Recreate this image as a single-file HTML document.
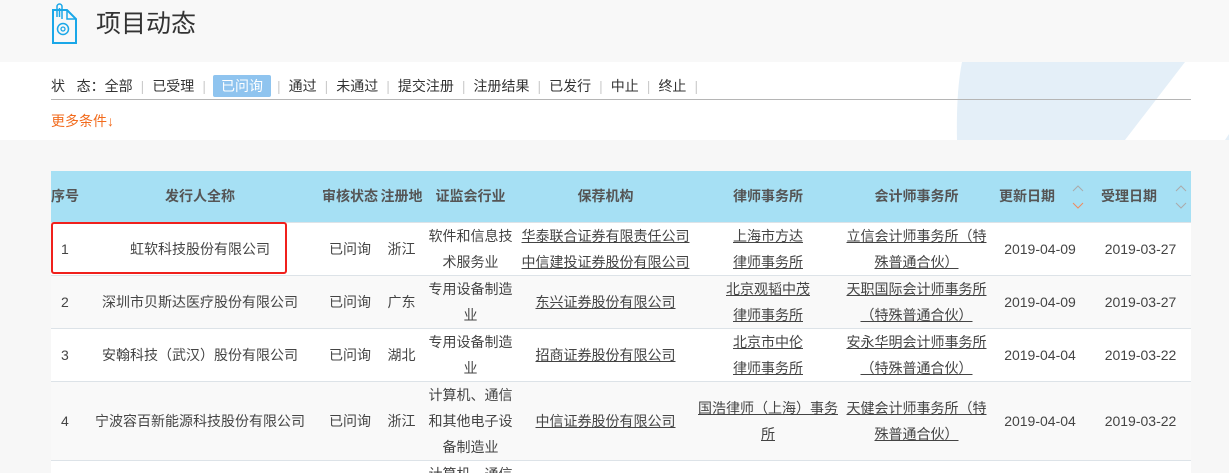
<!DOCTYPE html>
<html><head><meta charset="utf-8"><style>
*{margin:0;padding:0;box-sizing:border-box}
html,body{width:1229px;height:473px;overflow:hidden}
body{background:#f7f7f7;font-family:"Liberation Sans","Noto Sans CJK SC",sans-serif;color:#333;position:relative}
.top{position:absolute;left:0;top:0;width:1229px;height:62px;background:#f8f8f8}
.title{position:absolute;left:96px;top:7px;font-size:25px;color:#333;line-height:34px}
.filter{position:absolute;left:0;top:62px;width:1229px;height:78px;background:#fff;overflow:hidden}
.st{position:absolute;left:51px;top:13px;font-size:14px;line-height:22px;white-space:nowrap;color:#333}
.st span{display:inline-block;padding:0 8px}
.st span:first-child{padding-left:0}
.st .sep{color:#ccc;padding:0}
.st .on{background:#8fc4ef;color:#fff;border-radius:2px;padding:0 8px;margin:0 6px 0 7px}
.line{position:absolute;left:51px;top:37px;width:1140px;height:1px;background:#b5b5b5}
.more{position:absolute;left:51px;top:49px;font-size:14px;color:#f26b1d}
.wrap{position:absolute;left:51px;top:171px;width:1140px;height:302px;overflow:hidden}
table{width:1140px;border-collapse:collapse;font-size:14px;color:#444}
th{background:#a6e0f4;height:51px;font-weight:bold;color:#555;font-size:14px;text-align:center;white-space:nowrap}
td{text-align:center;line-height:26px;border-top:1px solid #dde3e8;padding:0;white-space:nowrap}
tr.r1 td{height:53px}
tr.r4 td{height:79px}
tr:nth-child(odd) td{background:#f9f9f9}
tr:nth-child(even) td{background:#fff}
u{text-decoration:underline}
.red{position:absolute;left:51px;top:222px;width:236px;height:52px;border:2px solid #f0201c;border-radius:3px}
</style></head><body>
<div class="top">
<svg style="position:absolute;left:51px;top:3px" width="28" height="41" viewBox="0 0 28 41"><path d="M2 7h14l9 9v24H2z" fill="none" stroke="#1aa7e8" stroke-width="2"/><path d="M16 7v9h9" fill="none" stroke="#1aa7e8" stroke-width="1.5"/><path d="M6 14V3.5a2.5 2.5 0 015 0V16M8.5 5v9" fill="none" stroke="#1aa7e8" stroke-width="1.5"/><circle cx="12" cy="26" r="5.5" fill="none" stroke="#1aa7e8" stroke-width="1.5"/><circle cx="12" cy="26" r="2" fill="none" stroke="#1aa7e8" stroke-width="1.3"/></svg>
<div class="title">项目动态</div>
</div>
<div class="filter">
<svg style="position:absolute;left:0;top:0" width="1229" height="78"><path d="M962 0H1185L1125 78H957Q956 30 962 0z" fill="#e4eff8"/><path d="M1225 78L1229 72V78z" fill="#e4eff8"/></svg>
<div class="st"><span>状&nbsp;&nbsp;&nbsp;态：全部</span><span class="sep">|</span><span>已受理</span><span class="sep">|</span><span class="on">已问询</span><span class="sep">|</span><span>通过</span><span class="sep">|</span><span>未通过</span><span class="sep">|</span><span>提交注册</span><span class="sep">|</span><span>注册结果</span><span class="sep">|</span><span>已发行</span><span class="sep">|</span><span>中止</span><span class="sep">|</span><span>终止</span><span class="sep">|</span></div>
<div class="line"></div>
<div class="more">更多条件↓</div>
</div>
<div class="wrap">
<table>
<colgroup><col style="width:29px"><col style="width:240px"><col style="width:60px"><col style="width:43px"><col style="width:95px"><col style="width:175px"><col style="width:150px"><col style="width:147px"><col style="width:100px"><col style="width:101px"></colgroup>
<tr><th style="text-align:left">序号</th><th>发行人全称</th><th>审核状态</th><th>注册地</th><th>证监会行业</th><th>保荐机构</th><th>律师事务所</th><th>会计师事务所</th><th style="text-align:left;padding-left:9px">更新日期</th><th style="text-align:left;padding-left:11px">受理日期</th></tr>
<tr class="r1"><td style="text-align:left;padding-left:10px">1</td><td>虹软科技股份有限公司</td><td>已问询</td><td>浙江</td><td>软件和信息技<br>术服务业</td><td><u>华泰联合证券有限责任公司</u><br><u>中信建投证券股份有限公司</u></td><td><u>上海市方达</u><br><u>律师事务所</u></td><td><u>立信会计师事务所（特</u><br><u>殊普通合伙）</u></td><td>2019-04-09</td><td>2019-03-27</td></tr>
<tr class="r1"><td style="text-align:left;padding-left:10px">2</td><td>深圳市贝斯达医疗股份有限公司</td><td>已问询</td><td>广东</td><td>专用设备制造<br>业</td><td><u>东兴证券股份有限公司</u></td><td><u>北京观韬中茂</u><br><u>律师事务所</u></td><td><u>天职国际会计师事务所</u><br><u>（特殊普通合伙）</u></td><td>2019-04-09</td><td>2019-03-27</td></tr>
<tr class="r1"><td style="text-align:left;padding-left:10px">3</td><td>安翰科技（武汉）股份有限公司</td><td>已问询</td><td>湖北</td><td>专用设备制造<br>业</td><td><u>招商证券股份有限公司</u></td><td><u>北京市中伦</u><br><u>律师事务所</u></td><td><u>安永华明会计师事务所</u><br><u>（特殊普通合伙）</u></td><td>2019-04-04</td><td>2019-03-22</td></tr>
<tr class="r4"><td style="text-align:left;padding-left:10px">4</td><td>宁波容百新能源科技股份有限公司</td><td>已问询</td><td>浙江</td><td>计算机、通信<br>和其他电子设<br>备制造业</td><td><u>中信证券股份有限公司</u></td><td><u>国浩律师（上海）事务</u><br><u>所</u></td><td><u>天健会计师事务所（特</u><br><u>殊普通合伙）</u></td><td>2019-04-04</td><td>2019-03-22</td></tr>
<tr class="r4"><td></td><td></td><td></td><td></td><td style="vertical-align:top">计算机、通信</td><td></td><td></td><td></td><td></td><td></td></tr>
</table>
</div>
<svg style="position:absolute;left:1071px;top:183px" width="14" height="28"><path d="M2 8L7 3L12 8" fill="none" stroke="#aaa" stroke-width="1"/><path d="M2 20L7 25L12 20" fill="none" stroke="#f08a5d" stroke-width="1"/></svg>
<svg style="position:absolute;left:1174px;top:183px" width="14" height="28"><path d="M2 8L7 3L12 8" fill="none" stroke="#aaa" stroke-width="1"/><path d="M2 20L7 25L12 20" fill="none" stroke="#aaa" stroke-width="1"/></svg>
<div class="red"></div>
</body></html>
